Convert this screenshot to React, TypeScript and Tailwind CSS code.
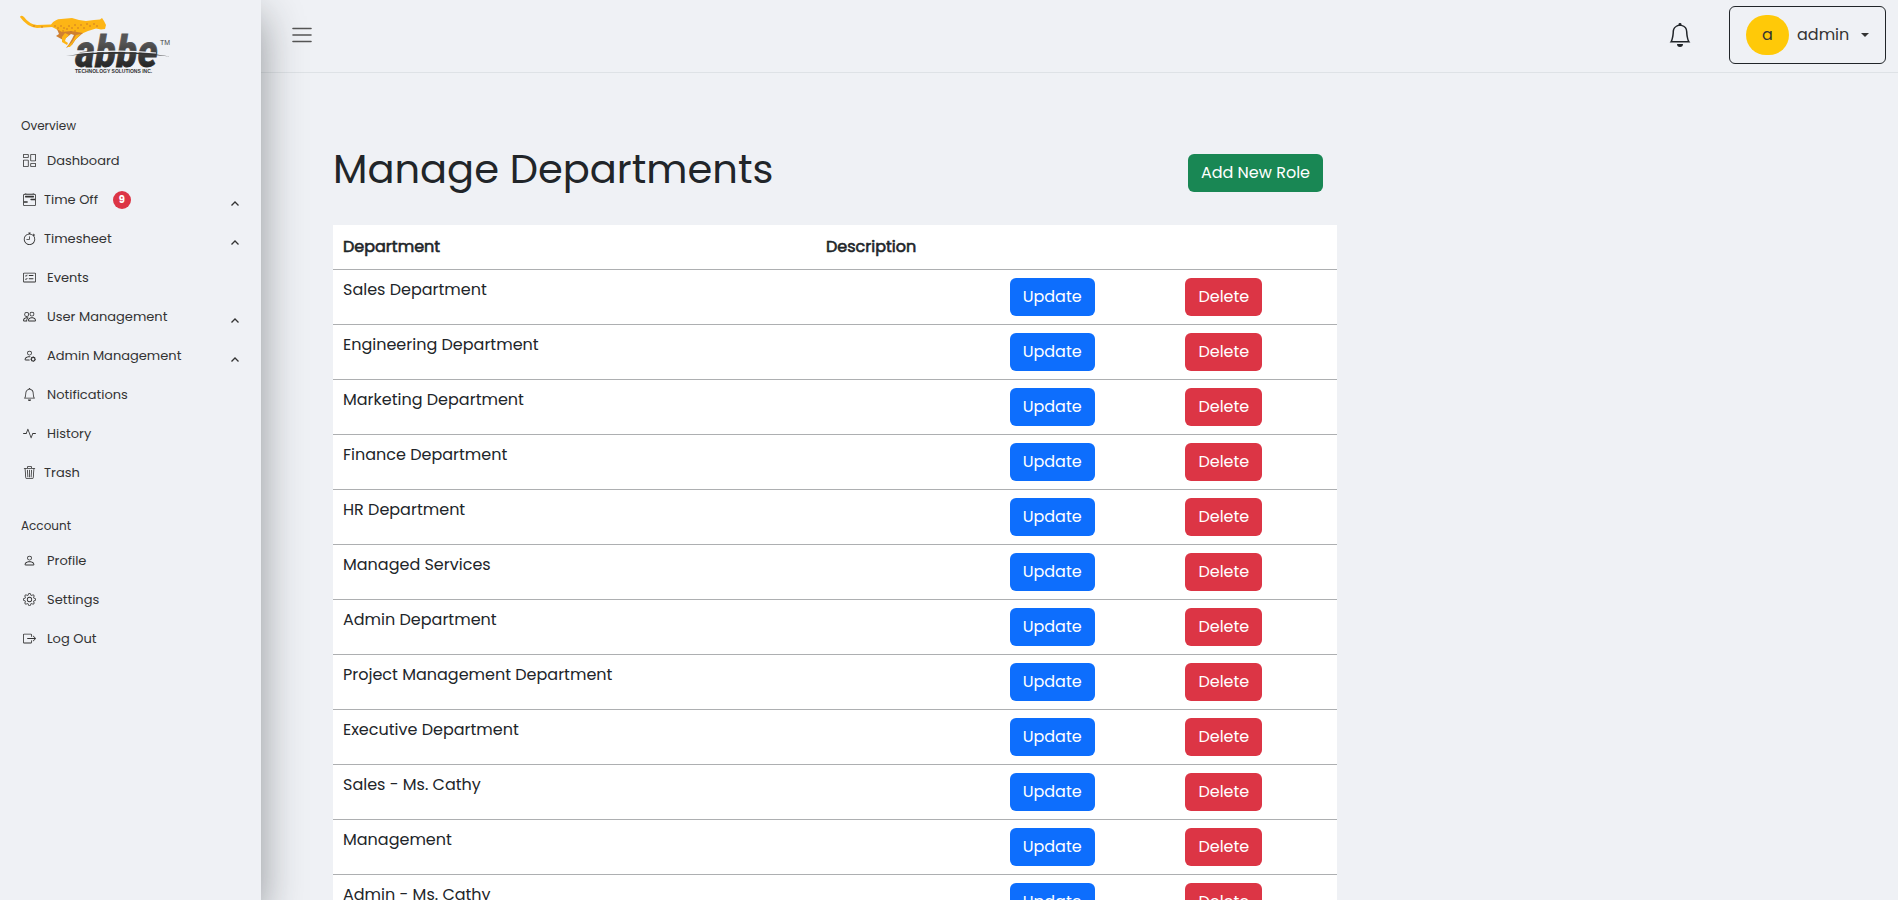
import React from "react";
import type { IconType } from "react-icons";
import {
  BsActivity,
  BsBell,
  BsBoxArrowRight,
  BsCalendar2Range,
  BsCardChecklist,
  BsColumnsGap,
  BsGear,
  BsPeople,
  BsPerson,
  BsPersonGear,
  BsStopwatch,
  BsTrash3,
} from "react-icons/bs";

type NavItem = {
  label: string;
  icon: IconType;
  tight?: boolean;
  badge?: number;
  expandable?: boolean;
};

const overview: NavItem[] = [
  { label: "Dashboard", icon: BsColumnsGap },
  { label: "Time Off", icon: BsCalendar2Range, tight: true, badge: 9, expandable: true },
  { label: "Timesheet", icon: BsStopwatch, tight: true, expandable: true },
  { label: "Events", icon: BsCardChecklist },
  { label: "User Management", icon: BsPeople, expandable: true },
  { label: "Admin Management", icon: BsPersonGear, expandable: true },
  { label: "Notifications", icon: BsBell },
  { label: "History", icon: BsActivity },
  { label: "Trash", icon: BsTrash3, tight: true },
];

const account: NavItem[] = [
  { label: "Profile", icon: BsPerson },
  { label: "Settings", icon: BsGear },
  { label: "Log Out", icon: BsBoxArrowRight },
];

const departments = [
  "Sales Department",
  "Engineering Department",
  "Marketing Department",
  "Finance Department",
  "HR Department",
  "Managed Services",
  "Admin Department",
  "Project Management Department",
  "Executive Department",
  "Sales - Ms. Cathy",
  "Management",
  "Admin - Ms. Cathy",
];

const spots = [
  [56, 26], [59, 28], [62, 26], [65, 28], [68, 29], [70, 26], [73, 28], [76, 25], [79, 28],
  [82, 25], [85, 28], [88, 24], [91, 26], [95, 24], [98, 26], [64, 31], [72, 32], [76, 31], [35, 26], [43, 27],
];

function Logo() {
  return (
    <svg viewBox="18 12 156 64" className="h-16 w-[156px]" role="img" aria-label="abbe Technology Solutions Inc.">
      <defs>
        <linearGradient id="ink" x1="0" y1="0" x2="0" y2="1">
          <stop offset="0.3" stopColor="#565656" />
          <stop offset="0.8" stopColor="#242424" />
        </linearGradient>
      </defs>
      <path
        d="M21 17 Q22 14.5 25 17 Q30 24 38 25 L52 24.5 Q56 19 62 19 L73 18 Q80 20.5 87 21 L95 20 L101 19.5 L103 18 L105 21 L107 25 L106 29 L102 29.5 L97 28.5 L89 31 L82 34 L76 38 L75 33 L68 33 L61 32 L57 29 L53 27 L38 28 Q28 27 21 17Z"
        fill="#fdb515"
      />
      <path d="M58 29 L63 32 L72 31 L84 33 L77 39 L73 45 L67 48 L70 44 L73 39 L75 35 L72 34 L67 38 L64 40 L57 36 L60 34Z" fill="#cf8030" />
      <path d="M66 33 L70 35 L67 38 L66 41 L69 43 L68 45 L63 42 L63 37Z M77 35 L82 34 L76 40 L71 47 L68 47 L73 42Z" fill="#fdb515" />
      {spots.map(([x, y]) => (
        <circle key={`${x}-${y}`} cx={x} cy={y} r="0.8" fill="#c9772a" />
      ))}
      <text
        x="76"
        y="67"
        fontSize="44"
        fontWeight="700"
        fontStyle="italic"
        fill="url(#ink)"
        stroke="url(#ink)"
        strokeWidth="0.8"
        fontFamily="'Roboto Condensed', 'Liberation Sans Narrow', 'Liberation Sans', sans-serif"
      >
        abbe
      </text>
      <path d="M76 53.5 Q118 49 157 53" fill="none" stroke="#eff1f5" strokeWidth="1.2" />
      <path d="M67 56 Q118 48 171 56.5 Q150 54 130 53.8 L95 54 Q80 54.4 67 56Z" fill="#333" />
      <text x="161" y="45" fontSize="7" fill="#444" fontFamily="'Liberation Sans', sans-serif">TM</text>
      <text x="76" y="73" fontSize="5" fontWeight="700" fill="#333" fontFamily="'Liberation Sans', sans-serif">
        TECHNOLOGY SOLUTIONS INC.
      </text>
    </svg>
  );
}

function NavList({ items }: { items: NavItem[] }) {
  return (
    <ul>
      {items.map(({ label, icon: Icon, tight, badge, expandable }) => (
        <li key={label}>
          <a href="#" className="flex h-[39px] items-center pr-[22px] pl-0.5">
            <Icon className="size-[13px] shrink-0" />
            <span className={tight ? "ml-2" : "ml-[11px]"}>{label}</span>
            {badge !== undefined && (
              <span className="ml-[15px] flex size-[18px] items-center justify-center rounded-full bg-[#dc3545] text-[10px] font-bold text-white">
                {badge}
              </span>
            )}
            {expandable && (
              <svg viewBox="0 0 8 5" className="mt-2 ml-auto h-[5px] w-2" fill="none" stroke="currentColor" strokeWidth="1.3">
                <path d="M0.5 4.5 L4 1 L7.5 4.5" />
              </svg>
            )}
          </a>
        </li>
      ))}
    </ul>
  );
}

export default function App() {
  return (
    <div className="flex h-screen overflow-hidden bg-[#eff1f5] font-['Poppins','Inter',sans-serif] text-[#212529]">
      <aside className="z-10 w-[261px] shrink-0 bg-[#eff1f5] pl-[21px] text-[13px] text-[#333] shadow-[0_16px_40px_rgba(33,37,41,0.45)]">
        <a href="#" className="-ml-1 block pt-3">
          <Logo />
        </a>
        <nav aria-label="Main">
          <h2 className="mt-10 mb-[5px] text-[12px] leading-5">Overview</h2>
          <NavList items={overview} />
          <h2 className="mt-6 mb-[5px] text-[12px] leading-5">Account</h2>
          <NavList items={account} />
        </nav>
      </aside>

      <div className="flex min-w-0 flex-1 flex-col">
        <header className="flex h-[73px] shrink-0 items-center border-b border-[#dee2e6] pr-3 pb-0.5 pl-[30px]">
          <button type="button" aria-label="Toggle menu" className="text-[#555]">
            <svg viewBox="0 0 22 18" className="h-[18px] w-[22px]" fill="none" stroke="currentColor" strokeWidth="1.6" strokeLinecap="round">
              <path d="M2 2.5 H20 M2 9 H20 M2 15.5 H20" />
            </svg>
          </button>
          <button type="button" aria-label="Notifications" className="mr-[37px] ml-auto">
            <BsBell className="size-6" />
          </button>
          <button type="button" className="flex h-[58px] w-[157px] items-center rounded-md border border-[#212529] px-4 text-[#333]">
            <span className="flex h-10 w-[43px] items-center justify-center rounded-full bg-[#ffc908]">a</span>
            <span className="ml-2">admin</span>
            <svg viewBox="0 0 8 4" className="ml-auto h-1 w-2" fill="currentColor">
              <path d="M0 0 H8 L4 4Z" />
            </svg>
          </button>
        </header>

        <main className="flex-1 overflow-y-auto px-[72px] pt-[72px] [scrollbar-width:none]">
          <div className="w-full max-w-[1004px]">
            <div className="mb-8 flex items-center justify-between pr-[14px]">
              <h1 className="text-[40px] leading-[48px]">Manage Departments</h1>
              <button type="button" className="mt-2 h-[38px] rounded-md bg-[#198754] px-[13px] text-white">
                Add New Role
              </button>
            </div>
            <table className="w-full table-fixed border-collapse bg-white text-left">
              <colgroup>
                <col className="w-[48.3%]" />
                <col className="w-[18.3%]" />
                <col className="w-[17.5%]" />
                <col className="w-[15.9%]" />
              </colgroup>
              <thead>
                <tr className="h-11 border-b border-[#adafb1]">
                  <th className="px-[10px] font-normal [-webkit-text-stroke:0.6px]">Department</th>
                  <th className="px-2 font-normal [-webkit-text-stroke:0.6px]">Description</th>
                  <th aria-label="Update" />
                  <th aria-label="Delete" />
                </tr>
              </thead>
              <tbody>
                {departments.map((name) => (
                  <tr key={name} className="h-[55px] border-b border-[#adafb1] align-top">
                    <td className="px-[10px] py-2">{name}</td>
                    <td />
                    <td className="p-2">
                      <button type="button" className="h-[38px] w-[85px] rounded-md bg-[#0d6efd] text-white">
                        Update
                      </button>
                    </td>
                    <td className="p-2">
                      <button type="button" className="h-[38px] w-[77px] rounded-md bg-[#dc3545] text-white">
                        Delete
                      </button>
                    </td>
                  </tr>
                ))}
              </tbody>
            </table>
          </div>
        </main>
      </div>
    </div>
  );
}
